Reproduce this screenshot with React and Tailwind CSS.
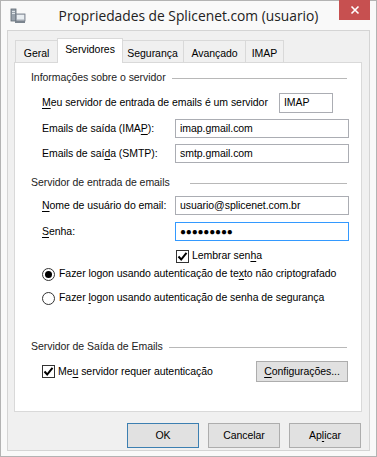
import React from "react";

const ui = { fontFamily: '"Liberation Sans", Arial, sans-serif' };

function U({ children }) {
  return <span className="underline underline-offset-2">{children}</span>;
}

function Field({ value, focus, className = "" }) {
  return (
    <div
      className={`${focus ? "border-[#3399ff]" : "border-[#abadb3]"} border bg-white h-[19px] flex items-center px-[4px] whitespace-nowrap ${className}`}
    >
      {value}
    </div>
  );
}

function GroupHeader({ text, gap = "gap-[6px]" }) {
  return (
    <div className={`flex items-center h-[16px] pl-[16px] pr-[14px] ${gap}`}>
      <span className="text-[#222] whitespace-nowrap">{text}</span>
      <div className="flex-1 h-px bg-[#b8b8b8]"></div>
    </div>
  );
}

function Check({ checked }) {
  return (
    <div className="w-[13px] h-[13px] border border-[#333] bg-white flex items-center justify-center shrink-0">
      {checked && (
        <svg width="11" height="11" viewBox="0 0 11 11">
          <path d="M1.5 5.5 L4.2 8.5 L9.5 1.8" fill="none" stroke="#000" strokeWidth="2" />
        </svg>
      )}
    </div>
  );
}

function Radio({ checked }) {
  return (
    <div className="w-[13px] h-[13px] rounded-full border border-[#333] bg-white flex items-center justify-center shrink-0">
      {checked && <div className="w-[7px] h-[7px] rounded-full bg-black"></div>}
    </div>
  );
}

function Tab({ label, active, w }) {
  if (active) {
    return (
      <div className={`relative z-10 -mx-[1px] -mb-px h-[25px] pt-[3px] text-center bg-white border border-b-0 border-[#d9d9d9] ${w}`}>
        {label}
      </div>
    );
  }
  return (
    <div className={`h-[22px] pt-[5px] text-center bg-[#f0f0f0] border border-b-0 border-[#d9d9d9] -ml-px first:ml-0 ${w}`}>
      {label}
    </div>
  );
}

function Button({ children, primary, className = "" }) {
  return (
    <div
      className={`${primary ? "border-[#3c7fb1]" : "border-[#adadad]"} border bg-[#e1e1e1] flex items-center justify-center whitespace-nowrap ${className}`}
    >
      {children}
    </div>
  );
}

function AppIcon() {
  return (
    <svg width="16" height="16" viewBox="0 0 16 16">
      <rect x="1" y="1" width="5" height="12" fill="#9aa3ad" stroke="#5d6670" strokeWidth="0.8" />
      <rect x="2" y="3" width="3" height="1" fill="#dfe4e8" />
      <rect x="2" y="5" width="3" height="1" fill="#dfe4e8" />
      <rect x="6" y="6" width="9" height="7" fill="#c8ced4" stroke="#6b7480" strokeWidth="0.8" />
      <rect x="7" y="7" width="7" height="4" fill="#e9eef2" />
      <rect x="5" y="13" width="10" height="2" fill="#7b848e" />
    </svg>
  );
}

export default function App() {
  return (
    <div className="w-[377px] h-[457px] bg-[#f9f9f9] border border-[#b3b3b3] flex flex-col" style={ui}>
      <div className="h-[29px] flex items-start shrink-0">
        <div className="w-[38px] pl-[9px] pt-[7px]">
          <AppIcon />
        </div>
        <div
          className="flex-1 text-center text-[13.8px] leading-[20px] pt-[5px] text-[#222] whitespace-nowrap"
          style={{ fontFamily: '"Open Sans", "Noto Sans", sans-serif' }}
        >
          Propriedades de Splicenet.com (usuario)
        </div>
        <div className="w-[38px] flex justify-end pr-[6px]">
          <div className="w-[31px] h-[20px] bg-[#c75050] flex items-center justify-center -mt-px">
            <svg width="10" height="10" viewBox="0 0 10 10">
              <path d="M1.5 1.5 L8.5 8.5 M8.5 1.5 L1.5 8.5" stroke="#fff" strokeWidth="1.6" />
            </svg>
          </div>
        </div>
      </div>

      <div className="mx-[6px] h-[421px] bg-[#f0f0f0] border border-[#d4d4d4] flex flex-col pt-[6px] px-[6px] text-[10.5px] tracking-[-0.05px] text-black">
        <div className="flex items-end pl-[1px] h-[25px]">
          <Tab label="Geral" w="w-[43px]" />
          <Tab label="Servidores" active w="w-[66px]" />
          <Tab label="Segurança" w="w-[63px]" />
          <Tab label="Avançado" w="w-[63px]" />
          <Tab label="IMAP" w="w-[39px]" />
        </div>

        <div className="h-[350px] w-[348px] bg-white border border-[#d9d9d9] flex flex-col pt-[7px]">
          <GroupHeader text="Informações sobre o servidor" />

          <div className="flex items-center mt-[7px] h-[20px] pl-[27px] whitespace-nowrap">
            <span className="w-[237px]"><U>M</U>eu servidor de entrada de emails é um servidor</span>
            <Field value="IMAP" className="w-[54px] h-[20px]" />
          </div>
          <div className="flex items-center mt-[6px] pl-[27px] whitespace-nowrap">
            <span className="w-[133px]">Emails de saída (IMA<U>P</U>):</span>
            <Field value="imap.gmail.com" className="w-[174px]" />
          </div>
          <div className="flex items-center mt-[6px] pl-[27px] whitespace-nowrap">
            <span className="w-[133px]">Emails de saí<U>d</U>a (SMTP):</span>
            <Field value="smtp.gmail.com" className="w-[174px]" />
          </div>

          <div className="mt-[12px]">
            <GroupHeader text="Servidor de entrada de emails" gap="gap-[20px]" />
          </div>

          <div className="flex items-center mt-[5px] pl-[27px] whitespace-nowrap">
            <span className="w-[133px]"><U>N</U>ome de usuário do email:</span>
            <Field value="usuario@splicenet.com.br" className="w-[174px]" />
          </div>
          <div className="flex items-center mt-[7px] pl-[27px] whitespace-nowrap">
            <span className="w-[133px]"><U>S</U>enha:</span>
            <Field
              value={<span className="text-[10px] tracking-[-0.2px]">●●●●●●●●●</span>}
              focus
              className="w-[174px]"
            />
          </div>
          <div className="flex items-center gap-[3px] mt-[7px] h-[16px] pl-[161px] whitespace-nowrap">
            <Check checked />
            <span>Lembrar sen<U>h</U>a</span>
          </div>
          <div className="flex items-center gap-[4px] mt-[2px] h-[16px] pl-[27px] whitespace-nowrap">
            <Radio checked />
            <span>Fazer logon usando autenticação de te<U>x</U>to não criptografado</span>
          </div>
          <div className="flex items-center gap-[4px] mt-[8px] h-[16px] pl-[27px] whitespace-nowrap">
            <Radio />
            <span>Fazer <U>l</U>ogon usando autenticação de senha de segurança</span>
          </div>

          <div className="mt-[33px]">
            <GroupHeader text="Servidor de Saída de Emails" />
          </div>

          <div className="flex items-center mt-[6px] h-[21px] pl-[27px] pr-[13px] whitespace-nowrap">
            <Check checked />
            <span className="ml-[3px] flex-1">Me<U>u</U> servidor requer autenticação</span>
            <Button className="w-[92px] h-[21px]"><U>C</U>onfigurações...</Button>
          </div>
        </div>

        <div className="flex justify-end gap-[9px] mt-[11px] pr-[2px]">
          <Button primary className="w-[72px] h-[25px]">OK</Button>
          <Button className="w-[72px] h-[25px]">Cancelar</Button>
          <Button className="w-[72px] h-[25px]">Ap<U>l</U>icar</Button>
        </div>
      </div>
    </div>
  );
}
